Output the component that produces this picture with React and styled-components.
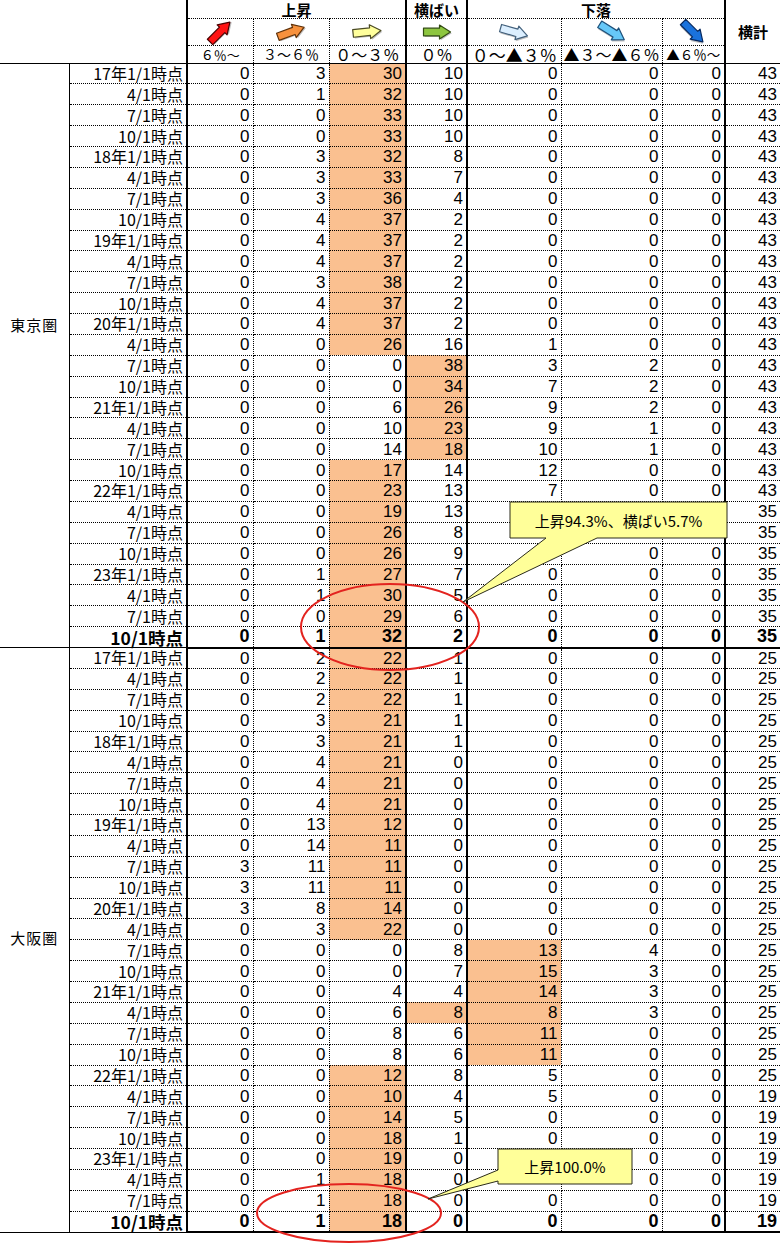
import React from "react";
import styled, { createGlobalStyle } from "styled-components";

const GlobalStyle = createGlobalStyle`
  html, body {
    margin: 0;
    padding: 0;
    background: #fff;
  }
  body {
    font-family: "Noto Sans CJK JP", sans-serif;
    color: #000;
  }
`;

const HIGHLIGHT = "#fac090";
const COLS = [69, 118, 66, 76, 77, 61, 94, 101, 63, 55];
const RIGHT = ["thin", "thick", "dot", "dot", "thick", "thick", "dot", "dot", "thick", "none"];
const LINE = {
  thin: "1px solid #000",
  thick: "2px solid #000",
  dot: "1px dotted #000",
  none: "none",
};

// null = value hidden under a callout in the original sheet
const tokyo = [
  ["17年1/1時点", [0, 3, 30, 10, 0, 0, 0, 43], [2]],
  ["4/1時点", [0, 1, 32, 10, 0, 0, 0, 43], [2]],
  ["7/1時点", [0, 0, 33, 10, 0, 0, 0, 43], [2]],
  ["10/1時点", [0, 0, 33, 10, 0, 0, 0, 43], [2]],
  ["18年1/1時点", [0, 3, 32, 8, 0, 0, 0, 43], [2]],
  ["4/1時点", [0, 3, 33, 7, 0, 0, 0, 43], [2]],
  ["7/1時点", [0, 3, 36, 4, 0, 0, 0, 43], [2]],
  ["10/1時点", [0, 4, 37, 2, 0, 0, 0, 43], [2]],
  ["19年1/1時点", [0, 4, 37, 2, 0, 0, 0, 43], [2]],
  ["4/1時点", [0, 4, 37, 2, 0, 0, 0, 43], [2]],
  ["7/1時点", [0, 3, 38, 2, 0, 0, 0, 43], [2]],
  ["10/1時点", [0, 4, 37, 2, 0, 0, 0, 43], [2]],
  ["20年1/1時点", [0, 4, 37, 2, 0, 0, 0, 43], [2]],
  ["4/1時点", [0, 0, 26, 16, 1, 0, 0, 43], [2]],
  ["7/1時点", [0, 0, 0, 38, 3, 2, 0, 43], [3]],
  ["10/1時点", [0, 0, 0, 34, 7, 2, 0, 43], [3]],
  ["21年1/1時点", [0, 0, 6, 26, 9, 2, 0, 43], [3]],
  ["4/1時点", [0, 0, 10, 23, 9, 1, 0, 43], [3]],
  ["7/1時点", [0, 0, 14, 18, 10, 1, 0, 43], [3]],
  ["10/1時点", [0, 0, 17, 14, 12, 0, 0, 43], [2]],
  ["22年1/1時点", [0, 0, 23, 13, 7, 0, 0, 43], [2]],
  ["4/1時点", [0, 0, 19, 13, null, null, null, 35], [2]],
  ["7/1時点", [0, 0, 26, 8, null, null, null, 35], [2]],
  ["10/1時点", [0, 0, 26, 9, null, 0, 0, 35], [2]],
  ["23年1/1時点", [0, 1, 27, 7, 0, 0, 0, 35], [2]],
  ["4/1時点", [0, 1, 30, 5, 0, 0, 0, 35], [2]],
  ["7/1時点", [0, 0, 29, 6, 0, 0, 0, 35], [2]],
  ["10/1時点", [0, 1, 32, 2, 0, 0, 0, 35], [2]],
];

const osaka = [
  ["17年1/1時点", [0, 2, 22, 1, 0, 0, 0, 25], [2]],
  ["4/1時点", [0, 2, 22, 1, 0, 0, 0, 25], [2]],
  ["7/1時点", [0, 2, 22, 1, 0, 0, 0, 25], [2]],
  ["10/1時点", [0, 3, 21, 1, 0, 0, 0, 25], [2]],
  ["18年1/1時点", [0, 3, 21, 1, 0, 0, 0, 25], [2]],
  ["4/1時点", [0, 4, 21, 0, 0, 0, 0, 25], [2]],
  ["7/1時点", [0, 4, 21, 0, 0, 0, 0, 25], [2]],
  ["10/1時点", [0, 4, 21, 0, 0, 0, 0, 25], [2]],
  ["19年1/1時点", [0, 13, 12, 0, 0, 0, 0, 25], [2]],
  ["4/1時点", [0, 14, 11, 0, 0, 0, 0, 25], [2]],
  ["7/1時点", [3, 11, 11, 0, 0, 0, 0, 25], [2]],
  ["10/1時点", [3, 11, 11, 0, 0, 0, 0, 25], [2]],
  ["20年1/1時点", [3, 8, 14, 0, 0, 0, 0, 25], [2]],
  ["4/1時点", [0, 3, 22, 0, 0, 0, 0, 25], [2]],
  ["7/1時点", [0, 0, 0, 8, 13, 4, 0, 25], [4]],
  ["10/1時点", [0, 0, 0, 7, 15, 3, 0, 25], [4]],
  ["21年1/1時点", [0, 0, 4, 4, 14, 3, 0, 25], [4]],
  ["4/1時点", [0, 0, 6, 8, 8, 3, 0, 25], [3, 4]],
  ["7/1時点", [0, 0, 8, 6, 11, 0, 0, 25], [4]],
  ["10/1時点", [0, 0, 8, 6, 11, 0, 0, 25], [4]],
  ["22年1/1時点", [0, 0, 12, 8, 5, 0, 0, 25], [2]],
  ["4/1時点", [0, 0, 10, 4, 5, 0, 0, 19], [2]],
  ["7/1時点", [0, 0, 14, 5, 0, 0, 0, 19], [2]],
  ["10/1時点", [0, 0, 18, 1, 0, 0, 0, 19], [2]],
  ["23年1/1時点", [0, 0, 19, 0, null, 0, 0, 19], [2]],
  ["4/1時点", [0, 1, 18, 0, null, 0, 0, 19], [2]],
  ["7/1時点", [0, 1, 18, 0, 0, 0, 0, 19], [2]],
  ["10/1時点", [0, 1, 18, 0, 0, 0, 0, 19], [2]],
];

const arrows = [
  { angle: -45, fill: "#ff1414", stroke: "#4a0000", len: 28 },
  { angle: -20, fill: "#f7913d", stroke: "#5e3008", len: 28 },
  { angle: -6, fill: "#ffff9c", stroke: "#4a4a22", len: 28 },
  { angle: 0, fill: "#8dc63f", stroke: "#324c12", len: 27 },
  { angle: 16, fill: "#dcefff", stroke: "#42607c", len: 28 },
  { angle: 32, fill: "#66c8f8", stroke: "#1d507a", len: 29 },
  { angle: 45, fill: "#1a72dc", stroke: "#06285e", len: 28 },
];

const rangeLabels = [
  { text: "６％～", size: 13 },
  { text: "３～６％", size: 14 },
  { text: "０～３％", size: 16 },
  { text: "０％", size: 16 },
  { text: "０～▲３％", size: 17 },
  { text: "▲３～▲６％", size: 16 },
  { text: "▲６％～", size: 13.5 },
];

const Sheet = styled.div`
  position: relative;
  width: 780px;
  height: 1250px;
  overflow: hidden;
  background: #fff;
`;

const Grid = styled.table`
  border-collapse: collapse;
  table-layout: fixed;
  width: 780px;
`;

const HeadRow = styled.tr`
  height: ${(p) => p.$h}px;
`;

const DataRow = styled.tr`
  height: 20.88px;
`;

const HeadCell = styled.th`
  padding: 0;
  border-right: ${(p) => LINE[p.$right || "none"]};
  border-bottom: ${(p) => LINE[p.$bottom || "none"]};
  font-family: "Noto Sans CJK JP", sans-serif;
  font-weight: 700;
  font-size: 15px;
  line-height: 17px;
  text-align: center;
  vertical-align: ${(p) => p.$valign || "middle"};
  white-space: nowrap;
`;

const RangeCell = styled(HeadCell)`
  font-weight: 400;
  font-size: ${(p) => p.$size}px;
  vertical-align: bottom;
`;

const IconCell = styled(HeadCell)`
  line-height: 0;
  svg {
    display: inline-block;
  }
`;

const Cell = styled.td`
  padding: 0 3px 0 0;
  border-right: ${(p) => LINE[p.$right]};
  border-bottom: ${(p) => LINE[p.$bottom]};
  background: ${(p) => (p.$hl ? HIGHLIGHT : "transparent")};
  text-align: right;
  vertical-align: middle;
  white-space: nowrap;
  line-height: 19px;
`;

const NumCell = styled(Cell)`
  font-family: "Liberation Sans Narrow", "Liberation Sans", sans-serif;
  font-size: ${(p) => (p.$bold ? 18 : 17)}px;
  font-weight: ${(p) => (p.$bold ? 700 : 400)};
`;

const DateCell = styled(Cell)`
  font-family: "Liberation Sans Narrow", "Noto Sans CJK JP", sans-serif;
  font-size: ${(p) => (p.$bold ? 17.5 : 16)}px;
  font-weight: ${(p) => (p.$bold ? 700 : 400)};
`;

const RegionCell = styled.td`
  padding: ${(p) => p.$top}px 0 0 0;
  border-right: ${LINE.thin};
  border-bottom: ${LINE.thin};
  vertical-align: top;
  text-align: center;
  font-family: "Noto Sans CJK JP", sans-serif;
  font-size: 15px;
  line-height: 17px;
  letter-spacing: 1px;
`;

const Overlay = styled.svg`
  position: absolute;
  left: 0;
  top: 0;
  pointer-events: none;
`;

const CalloutText = styled.div`
  position: absolute;
  left: ${(p) => p.$x}px;
  top: ${(p) => p.$y}px;
  width: ${(p) => p.$w}px;
  height: ${(p) => p.$h}px;
  display: flex;
  align-items: center;
  justify-content: center;
  font-family: "Noto Sans CJK JP", sans-serif;
  font-size: 15px;
  white-space: nowrap;
`;

function BlockArrow({ angle, fill, stroke, len }) {
  const h = 7;
  const s = 3.8;
  const half = len / 2;
  const head = half - 11;
  const d = `M${-half},${-s} H${head} V${-h} L${half},0 L${head},${h} V${s} H${-half} Z`;
  return (
    <svg width="38" height="26" viewBox="-19 -13 38 26">
      <g transform={`rotate(${angle})`}>
        <path d={d} fill="#808080" transform="translate(1.3 1.3)" opacity="0.5" />
        <path d={d} fill={fill} stroke={stroke} strokeWidth="1.2" strokeLinejoin="round" />
      </g>
    </svg>
  );
}

function Region({ name, rows, labelTop }) {
  return rows.map(([label, values, hl], i) => {
    const last = i === rows.length - 1;
    return (
      <DataRow key={name + i}>
        {i === 0 && (
          <RegionCell rowSpan={rows.length} $top={labelTop}>
            {name}
          </RegionCell>
        )}
        <DateCell $right="thick" $bottom={last ? "thin" : "dot"} $bold={last}>
          {label}
        </DateCell>
        {values.map((v, c) => (
          <NumCell
            key={c}
            $right={RIGHT[c + 2]}
            $bottom={last ? "thick" : "dot"}
            $hl={hl.includes(c)}
            $bold={last}
          >
            {v}
          </NumCell>
        ))}
      </DataRow>
    );
  });
}

export default function App() {
  return (
    <Sheet>
      <GlobalStyle />
      <Grid>
        <colgroup>
          {COLS.map((w, i) => (
            <col key={i} style={{ width: w }} />
          ))}
        </colgroup>
        <thead>
          <HeadRow $h={18}>
            <HeadCell colSpan={2} rowSpan={3} $right="thick" $bottom="thin" />
            <HeadCell colSpan={3} $right="thick" $bottom="dot" $valign="bottom">
              上昇
            </HeadCell>
            <HeadCell $right="thick" $bottom="dot" $valign="bottom">
              横ばい
            </HeadCell>
            <HeadCell colSpan={3} $right="thick" $bottom="dot" $valign="bottom">
              下落
            </HeadCell>
            <HeadCell rowSpan={3} $bottom="thin">
              横計
            </HeadCell>
          </HeadRow>
          <HeadRow $h={26}>
            {arrows.map((a, i) => (
              <IconCell key={i} $right={RIGHT[i + 2]} $bottom="dot">
                <BlockArrow {...a} />
              </IconCell>
            ))}
          </HeadRow>
          <HeadRow $h={18}>
            {rangeLabels.map((r, i) => (
              <RangeCell key={i} $right={RIGHT[i + 2]} $bottom="thin" $size={r.size}>
                {r.text}
              </RangeCell>
            ))}
          </HeadRow>
        </thead>
        <tbody>
          <Region name="東京圏" rows={tokyo} labelTop={252} />
          <Region name="大阪圏" rows={osaka} labelTop={281} />
        </tbody>
      </Grid>

      <Overlay width="780" height="1250" viewBox="0 0 780 1250">
        <ellipse cx="390" cy="627" rx="89" ry="43" fill="none" stroke="#e3231f" strokeWidth="2" />
        <ellipse cx="349" cy="1213" rx="92" ry="29" fill="none" stroke="#e3231f" strokeWidth="2" />
        <path
          d="M510,502 H727 V538 H597 L463,602 L546,538 H510 Z"
          fill="#ffff99"
          stroke="#2b2b1a"
          strokeWidth="1"
        />
        <path
          d="M498,1149 H632 V1184 H498 V1181 L428,1199 L498,1170 Z"
          fill="#ffff99"
          stroke="#2b2b1a"
          strokeWidth="1"
        />
      </Overlay>
      <CalloutText $x={510} $y={502} $w={217} $h={36}>
        上昇94.3%、横ばい5.7%
      </CalloutText>
      <CalloutText $x={498} $y={1149} $w={134} $h={35}>
        上昇100.0%
      </CalloutText>
    </Sheet>
  );
}
